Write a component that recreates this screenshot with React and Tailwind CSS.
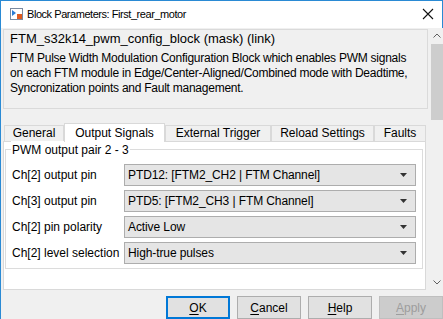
import React from "react";

const font = { fontFamily: '"Liberation Sans", Arial, sans-serif' };

function Dropdown({ value }) {
  return (
    <div className="flex-1 h-[22px] bg-[#e5e5e5] border border-[#adadad] flex items-center pl-[3px] pr-[8px]">
      <span className="flex-1 text-[12px] tracking-[-0.1px] text-black leading-none">{value}</span>
      <svg width="7" height="4" viewBox="0 0 7 4">
        <path d="M0 0h7L3.5 4z" fill="#333" />
      </svg>
    </div>
  );
}

function Row({ label, value }) {
  return (
    <div className="flex items-center h-[26px]">
      <span className="w-[112px] text-[12px] text-black">{label}</span>
      <Dropdown value={value} />
    </div>
  );
}

function Button({ first, rest, primary, disabled }) {
  return (
    <button
      className={
        "w-[64px] h-[23px] text-[12px] flex items-center justify-center " +
        (disabled
          ? "bg-[#cccccc] border border-[#bfbfbf] text-[#9d9d9d]"
          : primary
          ? "bg-[#e1e1e1] border-2 border-[#0078d7] text-black"
          : "bg-[#e1e1e1] border border-[#adadad] text-black")
      }
    >
      <span className="underline underline-offset-2">{first}</span>
      {rest}
    </button>
  );
}

export default function App() {
  const tabs = ["General", "Output Signals", "External Trigger", "Reload Settings", "Faults"];
  const widths = ["w-[60px]", "w-[101px]", "w-[106px]", "w-[103px]", "w-[52px]"];

  return (
    <div className="w-[443px] h-[319px] overflow-hidden bg-[#f0f0f0] border-l border-t border-[#2a8ad4] flex flex-col" style={font}>
      {/* title bar */}
      <div className="h-[27px] bg-white border-r border-[#2a8ad4] flex items-center pl-[9px] pr-[8px]">
        <svg width="13" height="12" viewBox="0 0 13 12" className="mr-[4px]">
          <rect x="0.5" y="0.5" width="12" height="11" fill="#fff" stroke="#7a8aa0" />
          <path d="M2 2l4 3-4 3z" fill="#2b7cd3" />
          <rect x="7" y="6" width="5" height="5" fill="#e05a1e" />
        </svg>
        <span className="flex-1 text-[11px] tracking-[-0.45px] text-black">Block Parameters: First_rear_motor</span>
        <svg width="12" height="12" viewBox="0 0 12 12">
          <path d="M1 1l10 10M11 1L1 11" stroke="#111" strokeWidth="1.1" />
        </svg>
      </div>

      {/* scrollable body */}
      <div className="flex h-[264px]">
        <div className="flex-1 pl-[2px] pr-[3px] pt-[1px] flex flex-col">
          <div className="h-[80px] border border-[#dadada] px-[6px] pt-[1px]">
            <div className="text-[13px] text-black leading-[16px]">FTM_s32k14_pwm_config_block (mask) (link)</div>
            <div className="text-[12px] tracking-[-0.25px] text-black leading-[15px] mt-[4px] whitespace-nowrap">
              <div>FTM Pulse Width Modulation Configuration Block which enables PWM signals</div>
              <div>on each FTM module in Edge/Center-Aligned/Combined mode with Deadtime,</div>
              <div>Syncronization points and Fault management.</div>
            </div>
          </div>

          {/* tabs */}
          <div className="mt-[13px] flex items-end h-[19px] pl-[1px]">
            {tabs.map((t, i) =>
              i === 1 ? (
                <div key={t} className={widths[i] + " h-[19px] bg-white border-t border-l border-r border-[#d9d9d9] text-[12px] text-black flex items-center justify-center -mb-px relative z-10"}>
                  {t}
                </div>
              ) : (
                <div key={t} className={widths[i] + " h-[16px] bg-[#f0f0f0] border-t border-l border-r border-[#d9d9d9] text-[12px] text-black flex items-center justify-center"}>
                  {t}
                </div>
              )
            )}
          </div>
          <div className="flex-1 bg-white border border-[#d9d9d9] mr-[2px] pl-[1px] pr-[2px] pt-[7px] pb-[20px]">
            <div className="relative h-full border border-[#dcdcdc] px-[6px] pt-[12px]">
              <span className="absolute -top-[9px] left-[5px] bg-white px-[1px] text-[12px] text-black">PWM output pair 2 - 3</span>
              <Row label="Ch[2] output pin" value="PTD12: [FTM2_CH2 | FTM Channel]" />
              <Row label="Ch[3] output pin" value="PTD5: [FTM2_CH3 | FTM Channel]" />
              <Row label="Ch[2] pin polarity" value="Active Low" />
              <Row label="Ch[2] level selection" value="High-true pulses" />
            </div>
          </div>
        </div>

        {/* scrollbar */}
        <div className="w-[12px] bg-[#f0f0f0] flex flex-col items-center">
          <div className="h-[16px] flex items-center justify-center">
            <svg width="8" height="5" viewBox="0 0 8 5"><path d="M0.5 4.5L4 1l3.5 3.5" stroke="#606060" fill="none" /></svg>
          </div>
          <div className="w-full h-[76px] bg-[#cdcdcd]" />
          <div className="flex-1" />
          <div className="h-[16px] flex items-center justify-center">
            <svg width="8" height="5" viewBox="0 0 8 5"><path d="M0.5 0.5L4 4l3.5-3.5" stroke="#606060" fill="none" /></svg>
          </div>
        </div>
      </div>

      {/* buttons */}
      <div className="flex justify-end gap-[7px] pt-[6px]">
        <Button first="O" rest="K" primary />
        <Button first="C" rest="ancel" />
        <Button first="H" rest="elp" />
        <Button first="A" rest="pply" disabled />
      </div>
    </div>
  );
}
